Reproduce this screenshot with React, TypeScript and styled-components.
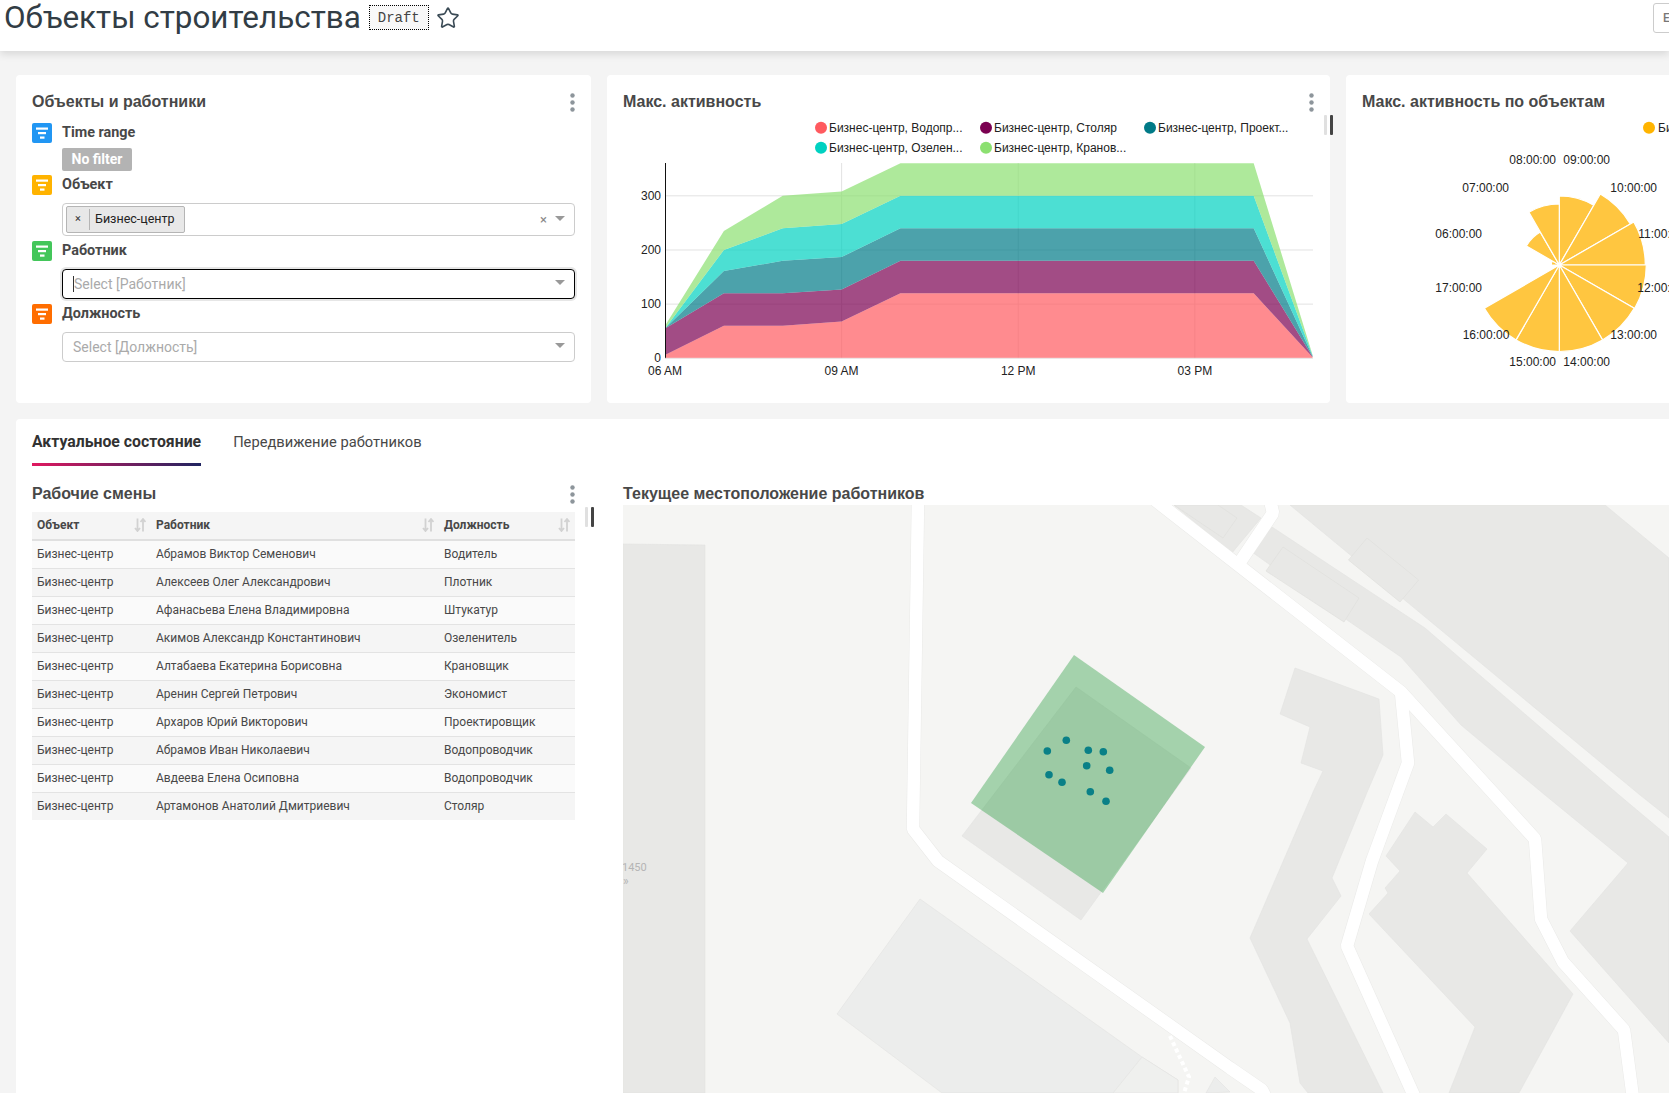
import React from "react";
import styled, { createGlobalStyle } from "styled-components";
import { Star } from "lucide-react";

const GlobalStyle = createGlobalStyle`
  html, body { margin: 0; padding: 0; background: #f4f4f4; }
  body { font-family: Roboto, "Liberation Sans", sans-serif; color: #484848; }
  * { box-sizing: border-box; }
`;

const Page = styled.div`
  width: 1669px;
  height: 1093px;
  overflow: hidden;
  display: flex;
  flex-direction: column;
  background: #f4f4f4;
`;
const Header = styled.header`
  height: 51px;
  flex: none;
  background: #fff;
  box-shadow: 0 3px 8px rgba(0, 0, 0, 0.12);
  display: flex;
  align-items: flex-start;
  padding: 0 0 0 4px;
  position: relative;
  z-index: 2;
`;
const PageTitle = styled.h1`
  margin: 0;
  font: 400 31.4px/35px Roboto, sans-serif;
  color: #323d45;
  white-space: nowrap;
`;
const DraftTag = styled.span`
  margin: 5px 0 0 8px;
  height: 25px;
  width: 60px;
  display: flex;
  align-items: center;
  justify-content: center;
  border: 1px dotted #000;
  background: #f8f8f8;
  font: 14px/1 "Liberation Mono", monospace;
  color: #444;
`;
const StarButton = styled.span`
  margin: 6px 0 0 7px;
  display: flex;
  color: #3a4a55;
`;
const EditButton = styled.div`
  margin: 3px 0 0 auto;
  width: 40px;
  height: 30px;
  margin-right: -24px;
  border: 1px solid #ccc;
  border-radius: 3px;
  font: 500 12px/28px Roboto, sans-serif;
  color: #777;
  padding-left: 9px;
`;
const CardRow = styled.div`
  display: flex;
  gap: 16px;
  padding: 24px 0 0 16px;
  flex: none;
`;
const Card = styled.section<{ $w: number }>`
  position: relative;
  flex: none;
  width: ${(p) => p.$w}px;
  height: 328px;
  background: #fff;
  border-radius: 4px;
  padding: 16px 16px 0;
`;
const CardHead = styled.div`
  display: flex;
  align-items: center;
  justify-content: space-between;
  height: 22px;
`;
const CardTitle = styled.h2`
  margin: 0;
  font: 700 16px/22px "Liberation Sans", Arial, sans-serif;
  color: #484848;
  white-space: nowrap;
`;
const ChartSvg = styled.svg`
  display: block;
  margin: 2px 0 0 -16px;
  font-family: "Liberation Sans", Arial, sans-serif;
  font-size: 12px;
`;
const FilterList = styled.div`
  margin-top: 10px;
`;
const FilterHead = styled.div`
  display: flex;
  align-items: center;
  gap: 10px;
  height: 20px;
`;
const FilterBadge = styled.span<{ $color: string }>`
  width: 20px;
  height: 20px;
  flex: none;
  border-radius: 2px;
  background: ${(p) => p.$color};
  display: flex;
`;
const FilterLabel = styled.span`
  font: 700 14.4px/20px Roboto, sans-serif;
  color: #484848;
`;
const NoFilter = styled.div`
  margin: 5px 0 4px 30px;
  width: 70px;
  height: 23px;
  border-radius: 2px;
  background: #b3b3b3;
  color: #fff;
  font: 700 14px/23px Roboto, sans-serif;
  text-align: center;
`;
const SelectBox = styled.div<{ $h: number; $focus?: boolean }>`
  margin: 8px 0 5px 30px;
  height: ${(p) => p.$h}px;
  border: 1px solid ${(p) => (p.$focus ? "#000" : "#ccc")};
  border-radius: 4px;
  background: #fff;
  box-shadow: ${(p) => (p.$focus ? "0 0 0 2px #e6e6e6" : "none")};
  display: flex;
  align-items: center;
  padding: 0 9px 0 10px;
  font: 14px/1 Roboto, sans-serif;
`;
const Placeholder = styled.span<{ $cursor?: boolean }>`
  color: #aaa;
  ${(p) => (p.$cursor ? "border-left: 1px solid #333;" : "")}
  line-height: 16px;
`;
const Tag = styled.span`
  margin-left: -7px;
  height: 27px;
  width: 119px;
  display: flex;
  align-items: center;
  background: #e8e8e8;
  border: 1px solid #b5b5b5;
  border-radius: 2px;
  font: 12.5px/1 Roboto, sans-serif;
  color: #222;
`;
const TagRemove = styled.span`
  width: 22px;
  height: 100%;
  display: flex;
  align-items: center;
  justify-content: center;
  color: #333;
  font-size: 11px;
  padding-bottom: 3px;
`;
const TagDivider = styled.span`
  width: 1px;
  height: 21px;
  background: #b5b5b5;
  margin-right: 5px;
`;
const ClearMark = styled.span`
  margin-left: auto;
  color: #888;
  font-size: 13px;
  margin-right: 8px;
`;
const Caret = styled.span<{ $auto?: boolean }>`
  ${(p) => (p.$auto ? "margin-left: auto;" : "")}
  width: 0;
  height: 0;
  margin-top: -3px;
  border-left: 5px solid transparent;
  border-right: 5px solid transparent;
  border-top: 5px solid #999;
`;
const ResizeGrip = styled.span<{ $dark?: boolean; $x: number; $y: number }>`
  position: absolute;
  left: ${(p) => p.$x}px;
  top: ${(p) => p.$y}px;
  width: 3px;
  height: 20px;
  border-radius: 1px;
  background: ${(p) => (p.$dark ? "#444" : "#e0e0e0")};
`;
const TabSection = styled.section`
  margin: 16px 0 0 16px;
  flex: 1;
  background: #fff;
  border-radius: 4px 0 0 0;
  display: flex;
  flex-direction: column;
  min-height: 0;
`;
const TabBar = styled.nav`
  display: flex;
  gap: 32px;
  padding: 0 16px;
  height: 47px;
  flex: none;
`;
const Tab = styled.span<{ $active?: boolean }>`
  padding-top: 13px;
  font: ${(p) => (p.$active ? "700 15.8px" : "400 14.7px")}/20px Roboto, sans-serif;
  color: ${(p) => (p.$active ? "#323232" : "#484848")};
  background: ${(p) =>
    p.$active ? "linear-gradient(90deg, #e0185f, #1f2460) bottom / 100% 3px no-repeat" : "none"};
`;
const TabBody = styled.div`
  flex: 1;
  display: grid;
  grid-template-columns: 543px 1fr;
  column-gap: 48px;
  padding: 17px 0 0 16px;
  min-height: 0;
`;
const TableColumn = styled.div`
  position: relative;
`;
const MapColumn = styled.div`
  display: flex;
  flex-direction: column;
  min-width: 0;
`;
const Table = styled.table`
  width: 543px;
  margin-top: 7px;
  border-collapse: collapse;
  table-layout: fixed;
  font: 12px/14px Roboto, sans-serif;
`;
const Th = styled.th<{ $w: number }>`
  width: ${(p) => p.$w}px;
  height: 28px;
  padding: 0 5px 2px;
  background: #f5f5f5;
  border-bottom: 2px solid #e0e0e0;
  text-align: left;
  font-weight: 700;
  color: #484848;
`;
const ThInner = styled.span`
  display: flex;
  align-items: center;
  justify-content: space-between;
`;
const Tr = styled.tr<{ $even: boolean }>`
  background: ${(p) => (p.$even ? "#f5f5f5" : "#fafafa")};
  &:last-child td { border-bottom: 0; }
`;
const Td = styled.td`
  height: 28px;
  padding: 0 5px;
  border-bottom: 1px solid #e3e3e3;
  color: #484848;
  white-space: nowrap;
`;
const MapSvg = styled.svg`
  display: block;
  flex: none;
  font-family: Roboto, sans-serif;
`;

const MoreDots = () => (
  <svg width="5" height="19" viewBox="0 0 5 19">
    <circle cx="2.5" cy="2.5" r="2.2" fill="#8d959b" />
    <circle cx="2.5" cy="9.5" r="2.2" fill="#8d959b" />
    <circle cx="2.5" cy="16.5" r="2.2" fill="#8d959b" />
  </svg>
);

const FilterIcon = () => (
  <svg width="20" height="20" viewBox="0 0 20 20">
    <rect x="4" y="4.5" width="12" height="2.2" fill="#fff" />
    <rect x="6" y="9" width="8" height="2.2" fill="#fff" />
    <rect x="8" y="13.5" width="4.5" height="2.2" fill="#fff" />
  </svg>
);

const SortIcon = () => (
  <svg width="12" height="14" viewBox="0 0 12 14">
    <path d="M3.5 0.5v12M1 10l2.5 3L6 10" fill="none" stroke="#d2d2d2" strokeWidth="1.8" />
    <path d="M9 13.5v-12M6.5 4L9 1l2.5 3" fill="none" stroke="#d2d2d2" strokeWidth="1.8" />
  </svg>
);

const X0 = 665;
const HR = 58.87;
const Y0 = 358.3;
const YS = 0.5416;
const hx = (h: number) => X0 + (h - 6) * HR;
const vy = (v: number) => Y0 - v * YS;
const hours = [6, 7, 8, 9, 10, 16, 17];
const stack = [
  { color: "#ff5a5f", top: [6, 60, 60, 68, 120, 120, 2] },
  { color: "#7b0051", top: [55, 120, 120, 127, 180, 180, 3] },
  { color: "#007a87", top: [55, 161, 180, 187, 240, 240, 4] },
  { color: "#00d1c1", top: [55, 200, 240, 248, 300, 300, 5] },
  { color: "#8ce071", top: [60, 235, 300, 308, 360, 360, 6] },
];
const legend = [
  { x: 821, y: 127.7, c: "#ff5a5f", t: "Бизнес-центр, Водопр..." },
  { x: 986, y: 127.7, c: "#7b0051", t: "Бизнес-центр, Столяр" },
  { x: 1150, y: 127.7, c: "#007a87", t: "Бизнес-центр, Проект..." },
  { x: 821, y: 147.7, c: "#00d1c1", t: "Бизнес-центр, Озелен..." },
  { x: 986, y: 147.7, c: "#8ce071", t: "Бизнес-центр, Кранов..." },
];

const AreaChart = () => (
  <ChartSvg width={723} height={287} viewBox="607 115 723 287">
    {legend.map((l) => (
      <g key={l.t}>
        <circle cx={l.x} cy={l.y} r={6} fill={l.c} />
        <text x={l.x + 8} y={l.y + 4} fill="#222">{l.t}</text>
      </g>
    ))}
    {[100, 200, 300].map((v) => (
      <line key={v} x1={X0} x2={1313} y1={vy(v)} y2={vy(v)} stroke="#e2e2e2" strokeWidth={1} />
    ))}
    {[9, 12, 15].map((h) => (
      <line key={h} x1={hx(h)} x2={hx(h)} y1={163} y2={Y0} stroke="#e2e2e2" strokeWidth={1} />
    ))}
    {stack.map((s, i) => {
      const lower = i === 0 ? hours.map(() => 0) : stack[i - 1].top;
      const up = hours.map((h, j) => `${hx(h)},${vy(s.top[j])}`);
      const down = hours.map((h, j) => `${hx(h)},${vy(lower[j])}`).reverse();
      return <polygon key={s.color} points={[...up, ...down].join(" ")} fill={s.color} fillOpacity={0.7} />;
    })}
    <line x1={X0 + 0.5} x2={X0 + 0.5} y1={163} y2={Y0} stroke="#111" strokeWidth={1} />
    <line x1={X0} x2={1313} y1={Y0} y2={Y0} stroke="#e8e8e8" strokeWidth={1} />
    {[0, 100, 200, 300].map((v) => (
      <text key={v} x={661} y={vy(v) + 4} textAnchor="end" fill="#222">{v}</text>
    ))}
    {[[9, "09 AM"], [12, "12 PM"], [15, "03 PM"], [6, "06 AM"]].map(([h, t]) => (
      <text key={t as string} x={hx(h as number)} y={375} textAnchor="middle" fill="#222">{t}</text>
    ))}
  </ChartSvg>
);

const PCX = 1559.3;
const PCY = 265;
const sectors = [69, 82, 86, 87, 86.5, 86.5, 86.5, 86.5, 8, 38, 61];
const sectorStarts = [0, 30, 60, 90, 120, 150, 180, 210, 270, 300, 330];
const polar = (deg: number, r: number) => {
  const a = (deg * Math.PI) / 180;
  return `${PCX + r * Math.sin(a)} ${PCY - r * Math.cos(a)}`;
};
const polarLabels: [number, number, string, "middle" | "start"][] = [
  [1532.7, 159.3, "08:00:00", "middle"],
  [1586.7, 159.3, "09:00:00", "middle"],
  [1485.7, 186.7, "07:00:00", "middle"],
  [1633.7, 186.7, "10:00:00", "middle"],
  [1458.7, 233.3, "06:00:00", "middle"],
  [1638.3, 233.3, "11:00:00", "start"],
  [1458.7, 287.3, "17:00:00", "middle"],
  [1637.3, 287.3, "12:00:00", "start"],
  [1486, 334.3, "16:00:00", "middle"],
  [1633.7, 334.3, "13:00:00", "middle"],
  [1532.7, 361, "15:00:00", "middle"],
  [1586.7, 361, "14:00:00", "middle"],
];

const PolarChart = () => (
  <ChartSvg width={400} height={287} viewBox="1346 115 400 287">
    <circle cx={1649} cy={127.7} r={6} fill="#ffb400" />
    <text x={1658} y={131.7} fill="#222">Бизнес-центр</text>
    {sectors.map((r, i) => (
      <path
        key={i}
        d={`M${PCX} ${PCY}L${polar(sectorStarts[i], r)}A${r} ${r} 0 0 1 ${polar(sectorStarts[i] + 30, r)}Z`}
        fill="#ffc640"
        stroke="#fff"
        strokeWidth={1.2}
      />
    ))}
    {polarLabels.map(([x, y, t, a]) => (
      <text key={t} x={x} y={y + 5} textAnchor={a} fill="#222">{t}</text>
    ))}
  </ChartSvg>
);

const buildings: { c: string; p: string }[] = [
  { c: "#e8e8e6", p: "623,544 705,545 705,1093 623,1093" },
  { c: "#e8e8e6", p: "1290,505 1605,505 1669,558 1669,818 1640,795" },
  { c: "#e8e8e6", p: "1272,527 1425,628 1619,795 1669,837 1669,1043 1570,931 1628,863 1545,795 1461,725 1401,657 1347,620 1252,552" },
  { c: "#e8e8e6", p: "1174,505 1241,505 1261,518 1236,548 1232,553" },
  { c: "#e8e8e6", p: "1295,668 1379,699 1383,755 1368,790 1332,878 1341,896 1307,939 1383,1093 1308,1093 1300,1083 1290,1023 1250,938 1314,790 1323,771 1301,763 1310,727 1280,714" },
  { c: "#e8e8e6", p: "1415,812 1433,827 1446,814 1487,849 1467,873 1573,994 1519,1093 1449,1093 1475,1027 1369,914 1388,893 1385,888 1400,871 1386,856" },
  { c: "#ecedec", p: "920,899 837,1014 942,1093 1178,1093 1178,1080 1142,1057" },
  { c: "#eff0ee", p: "1142,1057 1178,1080 1178,1093 1113,1093" },
  { c: "#ecedec", p: "1215,1077 1230,1092 1206,1093" },
  { c: "#e8e8e6", p: "1076,687 1191,768 1081,920 962,836" },
];
const outlines = [
  "1174,505 1218,505 1237,518 1223,538",
  "1283,547 1359,598 1344,622 1266,571",
  "1367,538 1418.6,580 1400,602 1348.5,560",
];
const roads = [
  "918,500 913,829 938,861 1230,1068 1262,1090 1266,1098",
  "1155,500 1401,692 1495,795 1535,839 1541,919 1563,962 1624,1030 1633,1098",
  "1401,692 1408,763 1372,861 1347,946 1415,1098",
  "1270,500 1273,513 1238,565",
];
const workers: [number, number][] = [
  [1066.3, 740.3], [1047.3, 751], [1088.3, 750.3], [1103.3, 751.7], [1086.7, 765.7],
  [1109.7, 770.3], [1049, 774.7], [1062, 782.3], [1090.3, 791.7], [1106, 801.3],
];

const WorkersMap = () => (
  <MapSvg width={1046} height={588} viewBox="623 505 1046 588">
    <rect x={623} y={505} width={1046} height={588} fill="#f5f5f3" />
    {buildings.map((b) => (
      <polygon key={b.p} points={b.p} fill={b.c} stroke="#e2e2e0" strokeWidth={0.6} />
    ))}
    {outlines.map((p) => (
      <polygon key={p} points={p} fill="#e8e8e6" stroke="#dfdfdd" strokeWidth={0.7} />
    ))}
    {roads.map((r) => (
      <polyline key={r} points={r} fill="none" stroke="#eaeae8" strokeWidth={13.5} strokeLinejoin="bevel" />
    ))}
    {roads.map((r) => (
      <polyline key={r} points={r} fill="none" stroke="#fff" strokeWidth={12.5} strokeLinejoin="bevel" />
    ))}
    <polyline points="1170,1036 1189,1077 1184,1093" fill="none" stroke="#fff" strokeWidth={4} strokeDasharray="4 3" />
    <polygon points="1074,655 1205,747 1103,893 971,803" fill="#2a9d41" fillOpacity={0.4} />
    {workers.map(([x, y]) => (
      <circle key={x} cx={x} cy={y} r={3.8} fill="#0a8087" />
    ))}
    <text x={622} y={871} fontSize={11} fill="#b5b5b5">1450</text>
    <text x={623} y={885} fontSize={12} fill="#b5b5b5">»</text>
  </MapSvg>
);

const rows = [
  ["Абрамов Виктор Семенович", "Водитель"],
  ["Алексеев Олег Александрович", "Плотник"],
  ["Афанасьева Елена Владимировна", "Штукатур"],
  ["Акимов Александр Константинович", "Озеленитель"],
  ["Алтабаева Екатерина Борисовна", "Крановщик"],
  ["Аренин Сергей Петрович", "Экономист"],
  ["Архаров Юрий Викторович", "Проектировщик"],
  ["Абрамов Иван Николаевич", "Водопроводчик"],
  ["Авдеева Елена Осиповна", "Водопроводчик"],
  ["Артамонов Анатолий Дмитриевич", "Столяр"],
];
const columns: [string, number][] = [["Объект", 119], ["Работник", 288], ["Должность", 136]];

export default function App() {
  return (
    <Page>
      <GlobalStyle />
      <Header>
        <PageTitle>Объекты строительства</PageTitle>
        <DraftTag>Draft</DraftTag>
        <StarButton><Star size={24} strokeWidth={1.6} /></StarButton>
        <EditButton>Е</EditButton>
      </Header>
      <CardRow>
        <Card $w={575}>
          <CardHead>
            <CardTitle>Объекты и работники</CardTitle>
            <MoreDots />
          </CardHead>
          <FilterList>
            <FilterHead>
              <FilterBadge $color="#2196f3"><FilterIcon /></FilterBadge>
              <FilterLabel>Time range</FilterLabel>
            </FilterHead>
            <NoFilter>No filter</NoFilter>
            <FilterHead>
              <FilterBadge $color="#ffb300"><FilterIcon /></FilterBadge>
              <FilterLabel>Объект</FilterLabel>
            </FilterHead>
            <SelectBox $h={33}>
              <Tag>
                <TagRemove>×</TagRemove>
                <TagDivider />
                Бизнес-центр
              </Tag>
              <ClearMark>×</ClearMark>
              <Caret />
            </SelectBox>
            <FilterHead>
              <FilterBadge $color="#43c65a"><FilterIcon /></FilterBadge>
              <FilterLabel>Работник</FilterLabel>
            </FilterHead>
            <SelectBox $h={30} $focus>
              <Placeholder $cursor>Select [Работник]</Placeholder>
              <Caret $auto />
            </SelectBox>
            <FilterHead>
              <FilterBadge $color="#ff6d00"><FilterIcon /></FilterBadge>
              <FilterLabel>Должность</FilterLabel>
            </FilterHead>
            <SelectBox $h={30}>
              <Placeholder>Select [Должность]</Placeholder>
              <Caret $auto />
            </SelectBox>
          </FilterList>
        </Card>
        <Card $w={723}>
          <CardHead>
            <CardTitle>Макс. активность</CardTitle>
            <MoreDots />
          </CardHead>
          <AreaChart />
          <ResizeGrip $x={717} $y={40} />
          <ResizeGrip $x={723} $y={40} $dark />
        </Card>
        <Card $w={400}>
          <CardHead>
            <CardTitle>Макс. активность по объектам</CardTitle>
          </CardHead>
          <PolarChart />
        </Card>
      </CardRow>
      <TabSection>
        <TabBar>
          <Tab $active>Актуальное состояние</Tab>
          <Tab>Передвижение работников</Tab>
        </TabBar>
        <TabBody>
          <TableColumn>
            <CardHead>
              <CardTitle>Рабочие смены</CardTitle>
              <MoreDots />
            </CardHead>
            <Table>
              <thead>
                <tr>
                  {columns.map(([name, w]) => (
                    <Th key={name} $w={w}>
                      <ThInner>{name}<SortIcon /></ThInner>
                    </Th>
                  ))}
                </tr>
              </thead>
              <tbody>
                {rows.map(([person, job], i) => (
                  <Tr key={person} $even={i % 2 === 1}>
                    <Td>Бизнес-центр</Td>
                    <Td>{person}</Td>
                    <Td>{job}</Td>
                  </Tr>
                ))}
              </tbody>
            </Table>
            <ResizeGrip $x={553} $y={24} />
            <ResizeGrip $x={559} $y={24} $dark />
          </TableColumn>
          <MapColumn>
            <CardHead>
              <CardTitle>Текущее местоположение работников</CardTitle>
            </CardHead>
            <WorkersMap />
          </MapColumn>
        </TabBody>
      </TabSection>
    </Page>
  );
}
